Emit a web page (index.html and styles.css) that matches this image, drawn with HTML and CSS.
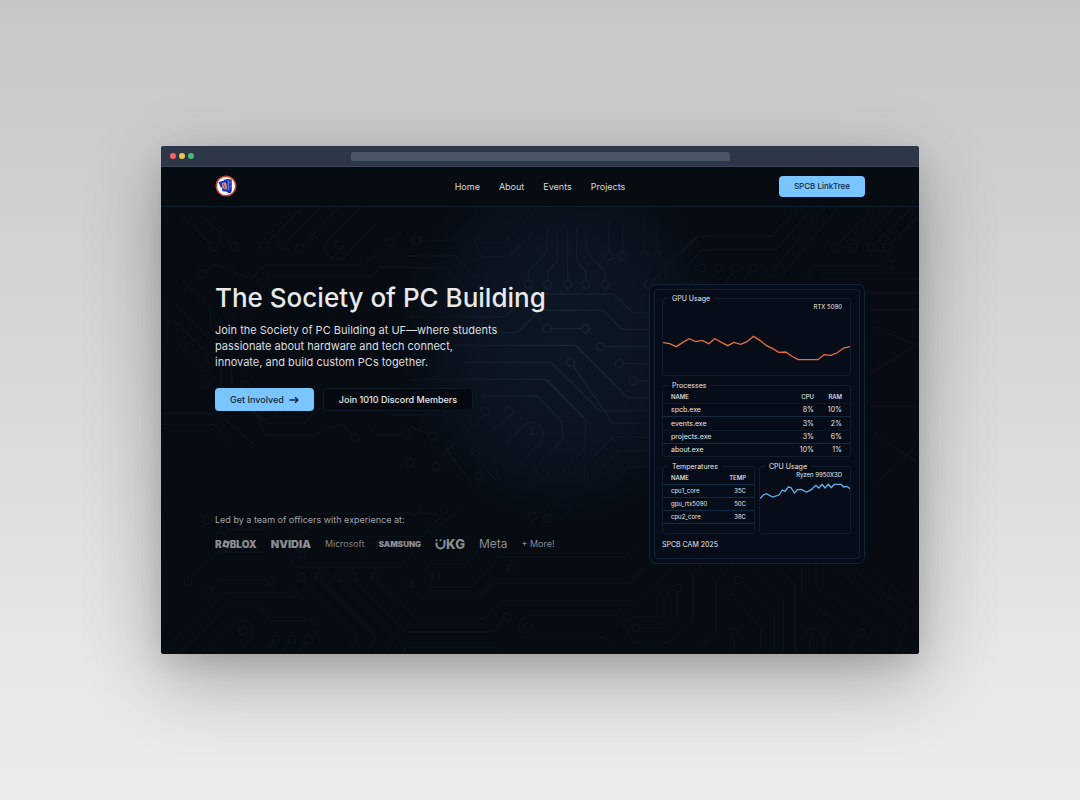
FILE: index.html
```html
<!DOCTYPE html>
<html lang="en">
<head>
<meta charset="utf-8">
<meta name="viewport" content="width=device-width, initial-scale=1">
<title>The Society of PC Building</title>
<link rel="stylesheet" href="styles.css">
</head>
<body class="stage">
<div class="browser">
  <div class="chrome">
    <div class="lights"><span class="light red"></span><span class="light yellow"></span><span class="light green"></span></div>
    <div class="address"></div>
  </div>
  <header class="nav">
    <a href="#" class="brand" aria-label="Home page">
      <svg class="brand-mark" viewBox="0 0 22 22" aria-hidden="true">
        <circle cx="11" cy="11" r="9.800" fill="#fff" stroke="#c8402c" stroke-width="1.500"/>
        <path d="M3.500 7 8.500 5.800 9 4.800l3.500-.8 4.300.4v10.800l-.8 2.600-2.600.6-1.400-1.600-4.600-.6-.6-3.600-1.300-.4z" fill="#1b35b5"/>
        <path d="M7 8.200l3-.9 1.600 1.700.2 5-1.500.6-1.700-1.200-1.200-.5z" fill="#e98a72"/>
        <path d="M8.300 8.600l1.700 4.600" stroke="#1b35b5" stroke-width=".7"/>
        <path d="M13.300 5.500v9.500M15.200 6.500v2M15.200 10.500v2" stroke="#8fa4ec" stroke-width=".7"/>
      </svg>
    </a>
    <nav class="links">
      <a href="#home">Home</a><a href="#about">About</a><a href="#events">Events</a><a href="#projects">Projects</a>
    </nav>
    <a href="#linktree" class="btn btn-primary btn-nav">SPCB LinkTree</a>
  </header>
  <main class="hero">
    <svg class="circuit" viewBox="161 207 758 447" preserveAspectRatio="xMidYMid slice" aria-hidden="true">
      <defs>
        <radialGradient id="glow" gradientUnits="userSpaceOnUse" cx="480" cy="430" r="420">
          <stop offset="0" stop-color="#152636"/>
          <stop offset=".5" stop-color="#11202d"/>
          <stop offset="1" stop-color="#0b131c"/>
        </radialGradient>
      </defs>
      <g class="bright" transform="translate(410 200) scale(.33333)">
        <path d="M32 122h90l78-78M217 129h62l92-92M217 170h78l95-97M0 168h135l65 65M0 204h105l60 60M0 350h285l70-68h255l58 56h48M100 398h222l68-67h190l54 57h82M130 436h368l156 158h62M160 487h262l147 145h147M0 538h405l132 132M215 588h165l77 78v56l-78 80v38M425 386h88M584 440h130M641 491h73M682 543h34M490 497 608 670h108"/>
        <path d="M412 82v74l-56 57v27M441 82v103l-28 28v27M473 82v158M500 82v103l27 28v27M528 82v74l57 57v27M597 52v103M638 52v103M702 52v103M743 52v103M725 244l140-135h35M835 194l40-43h25"/>
        <path d="M410 538l116 118v87l-80 85M226 646l-116 106 70 88M297 646l-116 106 76 88M320 800l70-72a34 34 0 1 0-52-50L248 770l20 70M716 712H608l-85 85v43M716 752h-90l-60 60M716 800h-60l-40 40M0 646h103M0 680l60 25"/>
        <g><circle cx="20" cy="122" r="12"/><circle cx="204" cy="129" r="12"/><circle cx="204" cy="170" r="12"/><circle cx="356" cy="253" r="12"/><circle cx="413" cy="253" r="12"/><circle cx="473" cy="253" r="12"/><circle cx="527" cy="253" r="12"/><circle cx="586" cy="253" r="12"/><circle cx="597" cy="168" r="12"/><circle cx="638" cy="168" r="12"/><circle cx="702" cy="168" r="12"/><circle cx="743" cy="168" r="12"/><circle cx="715" cy="253" r="12"/><circle cx="412" cy="386" r="12"/><circle cx="526" cy="386" r="12"/><circle cx="571" cy="440" r="12"/><circle cx="628" cy="491" r="12"/><circle cx="670" cy="543" r="12"/><circle cx="482" cy="487" r="12"/><circle cx="226" cy="634" r="12"/><circle cx="297" cy="634" r="12"/><circle cx="115" cy="646" r="12"/><circle cx="375" cy="691" r="12"/><circle cx="68" cy="710" r="12"/><circle cx="78" cy="800" r="12"/><circle cx="208" cy="828" r="12"/><circle cx="400" cy="825" r="12"/><circle cx="0" cy="788" r="12"/></g>
      </g>
      <g class="dim" transform="translate(160 205) scale(.33333)">
        <path d="M68 33l82 82M128 33l86 83M430 5 321 114M485 5 375 114M540 5 428 122M605 5 512 96a36 36 0 1 0 52 46l82-84M725 80l-28 25M782 106h58M133 200l30-24 110 46 42-42h298l28-27h200M190 262l80 32 60-80h305l26-27h180M60 220l92 92v50M42 295l105 105M42 345l96 96v32M42 400l88 88M182 340v200l140 115h110l70-68h60M215 360v180M250 500l120-100h90M5 626h170l110 95M5 658h155l60 62M255 550l60 140h145l80-34 36 30M620 655l28 33h80M680 630h160"/>
        <g><circle cx="159" cy="125" r="12"/><circle cx="222" cy="125" r="12"/><circle cx="313" cy="123" r="12"/><circle cx="367" cy="122" r="12"/><circle cx="418" cy="131" r="12"/><circle cx="538" cy="120" r="12"/><circle cx="691" cy="112" r="12"/><circle cx="769" cy="106" r="12"/><circle cx="125" cy="208" r="12"/><circle cx="217" cy="350" r="12"/><circle cx="138" cy="485" r="12"/><circle cx="138" cy="536" r="12"/><circle cx="257" cy="540" r="12"/><circle cx="584" cy="697" r="12"/><circle cx="740" cy="688" r="12"/><circle cx="818" cy="692" r="12"/></g>
      </g>
      <g class="dim" transform="translate(640 200) scale(.33333)">
        <path d="M25 245 168 109h226l78-86M142 194l45-45h222l108-126M400 208 555 23M410 248 592 23M150 252l28-38M200 252l30-38M250 252l32-38M300 252l32-38M594 132 705 23M648 132 760 23M703 132 815 23M750 132l88-84M497 248l22-52h218M540 250l10-12h288M675 278h163M690 330h148M700 380l138 60M690 520l148-90M690 620h148M700 700l138 90M710 850l128-120"/>
        <g><circle cx="133" cy="204" r="12"/><circle cx="187" cy="204" r="12"/><circle cx="237" cy="204" r="12"/><circle cx="288" cy="204" r="12"/><circle cx="338" cy="204" r="12"/><circle cx="390" cy="218" r="12"/><circle cx="585" cy="142" r="12"/><circle cx="639" cy="142" r="12"/><circle cx="694" cy="142" r="12"/><circle cx="741" cy="142" r="12"/><circle cx="749" cy="195" r="12"/></g>
      </g>
      <g class="dim" transform="translate(200 505) scale(.33333)">
        <path d="M85 74h110l48-48h475M300 95l40-38h220M610 60l60-50M670 85l60-55M780 15 670 95H430l-50 42M1010 25l40-25M1100 30l20-30"/>
        <g><circle cx="72" cy="74" r="12"/><circle cx="732" cy="13" r="12"/><circle cx="295" cy="148" r="12"/><circle cx="998" cy="34" r="12"/><circle cx="1040" cy="40" r="12"/><circle cx="22" cy="46" r="12"/></g>
      </g>
      <g class="dim">
        <path d="M190 579l28-27h50M210 589l10-9h48M161 650l66-57h62M180 653l50-47h28l14 15h40M200 653l35-30a10 10 0 0 1 15 18l-14 12M302 580l56 56-10 17M320 580l56 56-8 17M338 580l57 57-8 16M353 580l53 52h86l15-15M376 580l39 38h70l17-17h136l37-36M410 587l12 11h56l15-15h136l16-16M292 553a10 10 0 0 0 12 14h96l16-16M450 564h15l14-14M462 564h-28a10 11 0 0 0 0 23h38l28-30h125l16-14M664 598v19h-31M677 591v26l-13 11h-24M617 615h-88a10 11 0 0 0 0 23h77l12 15M617 615l17 27h36l23-22v-46l12-12M696 653l20-22v-50l18-18M730 594l31 34v19l-6 6M741 583l33 31v39M752 569l31 30v54M770 562l25 22v69M802 563v33l54 41-8 16M816 563v24l70 45-5 21M833 567l73 57-10 29M850 567l69 54M870 567l49 42M734 636v17M810 636v17M824 636v17M405 653v-6h90l8 6M262 653l12-10M280 653l12-10M296 653l12-10"/>
        <g><circle cx="188" cy="582" r="4"/><circle cx="208" cy="592" r="4"/><circle cx="271" cy="581" r="4"/><circle cx="294" cy="593" r="4"/><circle cx="301" cy="577" r="4"/><circle cx="319" cy="577" r="4"/><circle cx="338" cy="577" r="4"/><circle cx="353" cy="577" r="4"/><circle cx="375" cy="577" r="4"/><circle cx="315" cy="621" r="4"/><circle cx="243" cy="631" r="4"/><circle cx="276" cy="639" r="4"/><circle cx="292" cy="639" r="4"/><circle cx="309" cy="639" r="4"/><circle cx="409" cy="583" r="4"/><circle cx="436" cy="576" r="4"/><circle cx="302" cy="555" r="4"/><circle cx="511" cy="569" r="4"/><circle cx="507" cy="617" r="4"/><circle cx="528" cy="627" r="4"/><circle cx="626" cy="617" r="4"/><circle cx="636" cy="628" r="4"/><circle cx="664" cy="594" r="4"/><circle cx="677" cy="588" r="4"/><circle cx="728" cy="592" r="4"/><circle cx="739" cy="580" r="4"/><circle cx="734" cy="632" r="4"/><circle cx="810" cy="632" r="4"/><circle cx="824" cy="632" r="4"/><circle cx="861" cy="633" r="4"/></g>
      </g>
    </svg>
    <section class="intro">
      <h1 class="title">The Society of PC Building</h1>
      <p class="lead">Join the Society of PC Building at UF—where students passionate about hardware and tech connect, innovate, and build custom PCs together.</p>
      <div class="actions">
        <a href="#join" class="btn btn-primary">Get Involved
          <svg class="arrow" viewBox="0 0 10 8" aria-hidden="true"><path d="M.5 4h8.500M6 1.200 9 4 6 6.800"/></svg></a>
        <a href="#discord" class="btn btn-dark">Join 1010 Discord Members</a>
      </div>
      <div class="officers">
        <p class="officers-label">Led by a team of officers with experience at:</p>
        <div class="logos">
          <span class="logo roblox">R<svg class="roblox-o" viewBox="0 0 8 8" aria-hidden="true"><path fill-rule="evenodd" d="M2 0 8 1.600 6.200 8 0 6.400zM3.400 3l-.6 1.900 1.900.5.5-1.900z"/></svg>BLOX</span>
          <span class="logo nvidia">NVIDIA</span>
          <span class="logo microsoft">Microsoft</span>
          <span class="logo samsung">SAMSUNG</span>
          <span class="logo ukg"><svg class="ukg-u" viewBox="0 0 11 11" aria-hidden="true"><path d="M1.500 3.500v2a4 4 0 0 0 8 0v-4.500"/><circle cx="1.500" cy="1.200" r="1"/><circle cx="5.500" cy="1.200" r="1"/></svg>KG</span>
          <span class="logo meta">Meta</span>
          <span class="logo more">+ More!</span>
        </div>
      </div>
    </section>
    <aside class="monitor">
      <div class="screen">
        <fieldset class="box">
          <legend>GPU Usage</legend>
          <p class="device">RTX 5090</p>
          <svg class="chart gpu" viewBox="68 108 564 192" preserveAspectRatio="none" aria-hidden="true"><polyline points="68,203 88,206 108,215 128,202 147,191 166,200 186,196 206,206 224,191 263,212 282,202 302,208 321,200 341,184 360,196 380,212 398,220 417,232 438,231 456,243 475,254 535,254 554,239 574,241 592,234 613,219 632,215"/></svg>
        </fieldset>
        <fieldset class="box">
          <legend>Processes</legend>
          <table class="grid processes">
            <thead><tr><th>NAME</th><th>CPU</th><th>RAM</th></tr></thead>
            <tbody>
              <tr><td>spcb.exe</td><td>8%</td><td>10%</td></tr>
              <tr><td>events.exe</td><td>3%</td><td>2%</td></tr>
              <tr><td>projects.exe</td><td>3%</td><td>6%</td></tr>
              <tr><td>about.exe</td><td>10%</td><td>1%</td></tr>
            </tbody>
          </table>
        </fieldset>
        <div class="pair">
          <fieldset class="box">
            <legend>Temperatures</legend>
            <table class="grid temps">
              <thead><tr><th>NAME</th><th>TEMP</th></tr></thead>
              <tbody>
                <tr><td>cpu1_core</td><td>35C</td></tr>
                <tr><td>gpu_rtx5090</td><td>50C</td></tr>
                <tr><td>cpu2_core</td><td>38C</td></tr>
              </tbody>
            </table>
          </fieldset>
          <fieldset class="box">
            <legend>CPU Usage</legend>
            <p class="device">Ryzen 9950X3D</p>
            <svg class="chart cpu" viewBox="358 72 274 162" preserveAspectRatio="none" aria-hidden="true"><polyline points="358,131 368,120 378,116 396,126 416,120 426,105 434,109 444,96 452,98 463,114 472,104 483,103 500,111 514,104 528,91 537,99 547,88 556,99 566,88 575,98 584,88 605,88 612,96 622,94 632,101"/></svg>
          </fieldset>
        </div>
        <p class="stamp">SPCB CAM 2025</p>
      </div>
    </aside>
  </main>
</div>
</body>
</html>
```
FILE: styles.css
```css
* { box-sizing: border-box; }
p, h1 { margin: 0; }
a { color: inherit; text-decoration: none; }

.stage {
  margin: 0;
  min-height: 100vh;
  padding: 146px 161px;
  display: flex;
  background: linear-gradient(#c5c6c8, #dcdddf 60%, #e8e8e8 85%, #ebebeb);
  font-family: Inter, "Liberation Sans", sans-serif;
  color: #e6e8ea;
}
.browser {
  flex: 1;
  display: flex;
  flex-direction: column;
  border-radius: 3px;
  overflow: hidden;
  background: #070c13;
  box-shadow: 0 24px 76px rgba(0, 0, 0, .3), 0 8px 24px rgba(0, 0, 0, .08);
}

.chrome {
  height: 21px;
  display: grid;
  grid-template-columns: 1fr 2fr 1fr;
  align-items: center;
  background: #2d3748;
  border-bottom: 1px solid #3a4658;
}
.lights { display: flex; gap: 3px; padding-left: 9px; }
.light { width: 6px; height: 6px; border-radius: 50%; }
.red { background: #fc6464; }
.yellow { background: #ecc94b; }
.green { background: #48bb78; }
.address { height: 9px; border-radius: 2px; background: #4a5568; }

.nav {
  height: 40px;
  padding: 0 54px 1px;
  display: grid;
  grid-template-columns: 1fr auto 1fr;
  align-items: center;
  border-bottom: 1px solid #0e1b28;
}
.brand { display: flex; }
.brand-mark { width: 22px; height: 22px; }
.links { display: flex; gap: 19px; font-size: 9px; color: #d6d8da; }

.btn {
  display: inline-flex;
  align-items: center;
  gap: 5px;
  height: 23px;
  padding: 0 15px;
  border-radius: 4px;
  font-size: 9px;
  font-weight: 500;
  white-space: nowrap;
}
.btn-primary { background: #79c5ff; color: #10283c; }
.btn-dark { background: #060a10; border: 1px solid #0f1925; color: #e6e8ea; }
.btn-nav { justify-self: end; height: 21px; font-size: 8px; }
.arrow { width: 10px; height: 8px; fill: none; stroke: currentColor; stroke-width: 1.4; }

.hero {
  position: relative;
  flex: 1;
  display: grid;
  grid-template-columns: 1fr 216px;
  align-items: start;
  padding: 77px 54px;
  background: radial-gradient(ellipse 165px 185px at 53% 30%, #0d1824, #0b1420 50%, #070c13);
}
.circuit { position: absolute; inset: 0; width: 100%; height: 100%; fill: none; }
.bright { stroke: url(#glow); stroke-width: 4; }
.dim { stroke: #0b121b; stroke-width: 4; }
.dim:last-child { stroke-width: 1; }
.intro, .monitor { position: relative; }

.title { margin-top: -3px; font-size: 26px; line-height: 33px; font-weight: 500; color: #e8e9ea; white-space: nowrap; }
.lead { max-width: 286px; margin-top: 8px; font-size: 11px; line-height: 16px; color: #dcdee0; }
.actions { display: flex; gap: 9px; margin-top: 18px; }
.officers { margin-top: 102px; color: #8a8d91; }
.officers-label { font-size: 9px; line-height: 14px; color: #a0a3a7; }
.logos { display: flex; align-items: center; gap: 14px; margin-top: 9px; line-height: 16px; white-space: nowrap; }
.logo { display: inline-flex; align-items: center; }
.roblox { font-size: 10px; font-weight: 900; }
.roblox-o { width: 8px; height: 8px; fill: currentColor; }
.nvidia { font-size: 11px; font-weight: 900; }
.microsoft { font-family: "Open Sans", sans-serif; font-size: 9px; font-weight: 500; }
.samsung { font-size: 8px; font-weight: 900; }
.ukg { font-size: 13px; font-weight: 800; }
.ukg-u { width: 11px; height: 11px; fill: currentColor; }
.ukg-u path { fill: none; stroke: currentColor; stroke-width: 2; }
.meta { font-size: 12px; }
.more { font-size: 9px; }

.monitor { padding: 4px; border: 1px solid #10243a; border-radius: 7px; background: #070d18; }
.screen { padding: 4px 8px 8px 7px; border: 1px solid #122138; border-radius: 4px; display: grid; gap: 5px; }
.box { margin: 0; padding: 0; min-width: 0; border: 1px solid #111d2e; border-radius: 3px; }
.box legend { margin-left: 5px; padding: 0 4px; font-size: 7px; line-height: 9px; }
.device { padding-right: 8px; font-size: 6px; line-height: 8px; text-align: right; }
.chart { display: block; width: 100%; fill: none; }
.chart polyline { stroke-width: 1.3; vector-effect: non-scaling-stroke; }
.gpu { height: 64px; }
.gpu polyline { stroke: #e8703f; }
.cpu { height: 54px; }
.cpu polyline { stroke: #5fb4ee; }
.pair { display: grid; grid-template-columns: 93fr 92fr; gap: 4px; }

.grid { width: 100%; border-collapse: collapse; font-size: 7px; line-height: 9px; }
.grid th { font-size: 6px; font-weight: 500; }
.grid tr { height: 13px; border-bottom: 1px solid #132b42; }
.grid th, .grid td { padding: 0; text-align: right; }
.grid th:first-child, .grid td:first-child { padding-left: 8px; text-align: left; }
.grid th:last-child, .grid td:last-child { padding-right: 8px; }
.processes th:last-child { width: 36px; }
.processes tr { border-color: #0d1723; }
.processes tbody tr:nth-child(odd) { border-color: #132b42; }
.processes tbody tr:nth-child(2) { height: 14px; }
.processes tbody tr:last-child { border: 0; }
.temps { font-size: 6px; }
.stamp { font-size: 7px; line-height: 11px; }
```
